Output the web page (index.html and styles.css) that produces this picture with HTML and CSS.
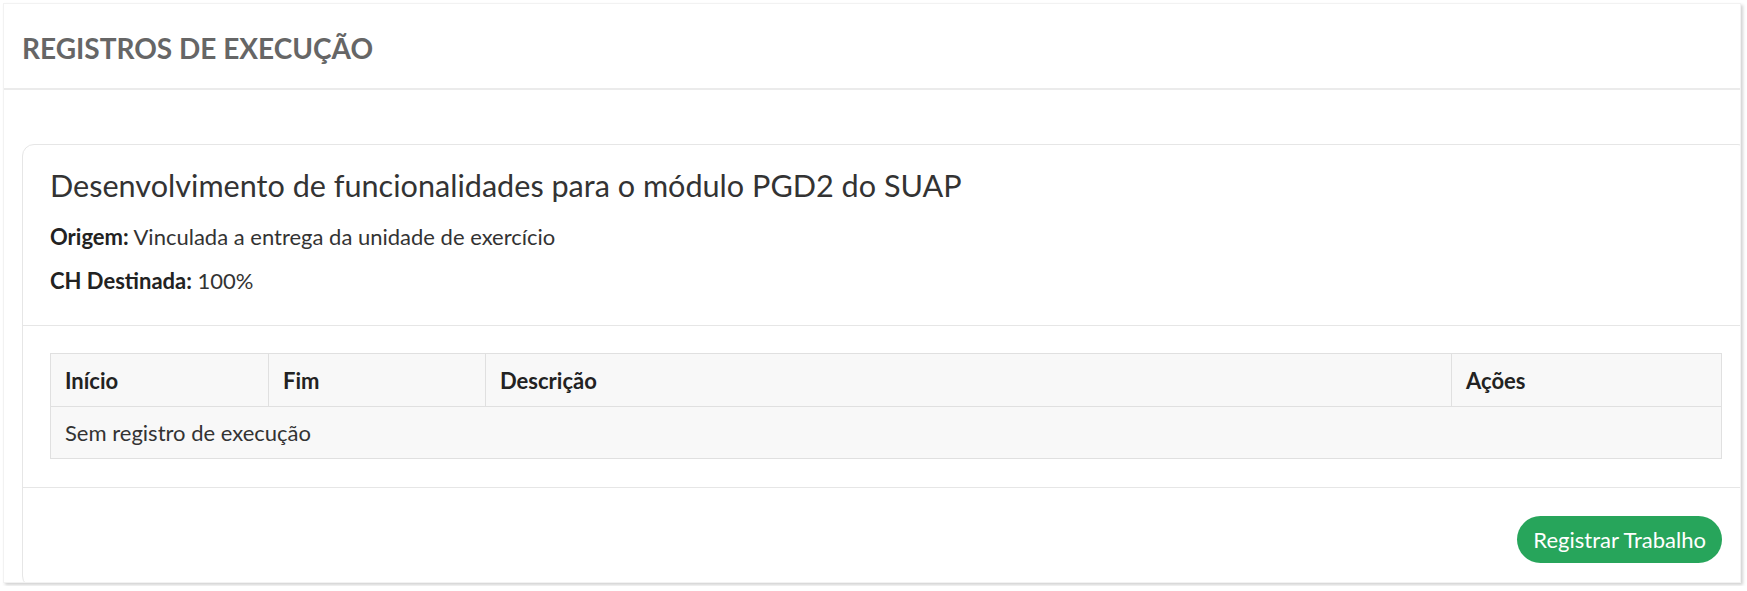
FILE: index.html
```html
<!DOCTYPE html>
<html lang="pt-BR">
<head>
    <meta charset="UTF-8">
    <meta name="viewport" content="width=device-width, initial-scale=1.0">
    <title>Registros de Execução</title>
    <link rel="stylesheet" href="styles.css">
</head>
<body>
    <div class="panel">
        <div class="panel-header">
            <h2>Registros de Execução</h2>
        </div>
        <div class="panel-body">
            <div class="card">
                <div class="card-header">
                    <h3>Desenvolvimento de funcionalidades para o módulo PGD2 do SUAP</h3>
                    <p><strong>Origem:</strong> Vinculada a entrega da unidade de exercício</p>
                    <p><strong>CH Destinada:</strong> 100%</p>
                </div>
                <div class="card-content">
                    <table class="data-table">
                        <thead>
                            <tr>
                                <th class="col-inicio">Início</th>
                                <th class="col-fim">Fim</th>
                                <th class="col-desc">Descrição</th>
                                <th>Ações</th>
                            </tr>
                        </thead>
                        <tbody>
                            <tr>
                                <td colspan="4">Sem registro de execução</td>
                            </tr>
                        </tbody>
                    </table>
                </div>
                <div class="card-footer">
                    <button class="btn-success">Registrar Trabalho</button>
                </div>
            </div>
        </div>
    </div>
</body>
</html>
```

FILE: styles.css
```css
/* Base */
body {
    font-family: Lato, 'Open Sans', sans-serif;
    background: #fff;
    color: #333;
    margin: 0;
    padding: 3px;
}

/* Painel externo */
.panel {
    height: 580px;
    box-sizing: border-box;
    width: 1738px;
    background: #fff;
    border: 1px solid #f2f2f2;
    box-shadow: 2px 2px 3px rgba(0, 0, 0, 0.18);
    overflow: hidden;
}
.panel-header {
    height: 84px;
    padding: 0 18px;
    display: flex;
    align-items: center;
    border-bottom: 2px solid #ebebeb;
}
.panel-header h2 {
    margin: 0;
    font-size: 28px;
    font-weight: 700;
    color: #666;
    text-transform: uppercase;
    padding-top: 4px;
}
.panel-body {
    padding: 54px 0 0 18px;
}

/* Cartão */
.card {
    margin-right: -10px;
    border: 1px solid #e6e6e6;
    border-radius: 12px;
    background: #fff;
}
.card-header {
    padding: 24px 27px 22px;
    border-bottom: 1px solid #e6e6e6;
}
.card-header h3 {
    margin: 0 0 12px;
    font-size: 30.6px;
    font-weight: 400;
    color: #333;
    line-height: 34px;
}
.card-header p {
    margin: 0;
    font-size: 22px;
    line-height: 44px;
    color: #333;
}
.card-header strong {
    color: #222;
}
.card-content {
    padding: 27px 27px 28px;
    border-bottom: 1px solid #e6e6e6;
}

/* Tabela */
.data-table {
    width: 100%;
    border-collapse: collapse;
    font-size: 22px;
}
.data-table th, .data-table td {
    border: 1px solid #e0e0e0;
    background: #f8f8f8;
    text-align: left;
    padding: 0 14px;
}
.data-table th {
    height: 52px;
    font-weight: 700;
    color: #222;
}
.data-table td {
    height: 51px;
    color: #333;
}
.col-inicio { width: 189px; }
.col-fim { width: 188px; }
.col-desc { width: 937px; }

/* Rodapé */
.card-footer {
    padding: 28px 27px 24px;
    display: flex;
    justify-content: flex-end;
}
.btn-success {
    font-family: Lato, sans-serif;
    font-size: 22px;
    height: 47px;
    padding: 0 16px;
    border: none;
    border-radius: 24px;
    background: #27a55b;
    color: #fff;
    cursor: pointer;
}
```
